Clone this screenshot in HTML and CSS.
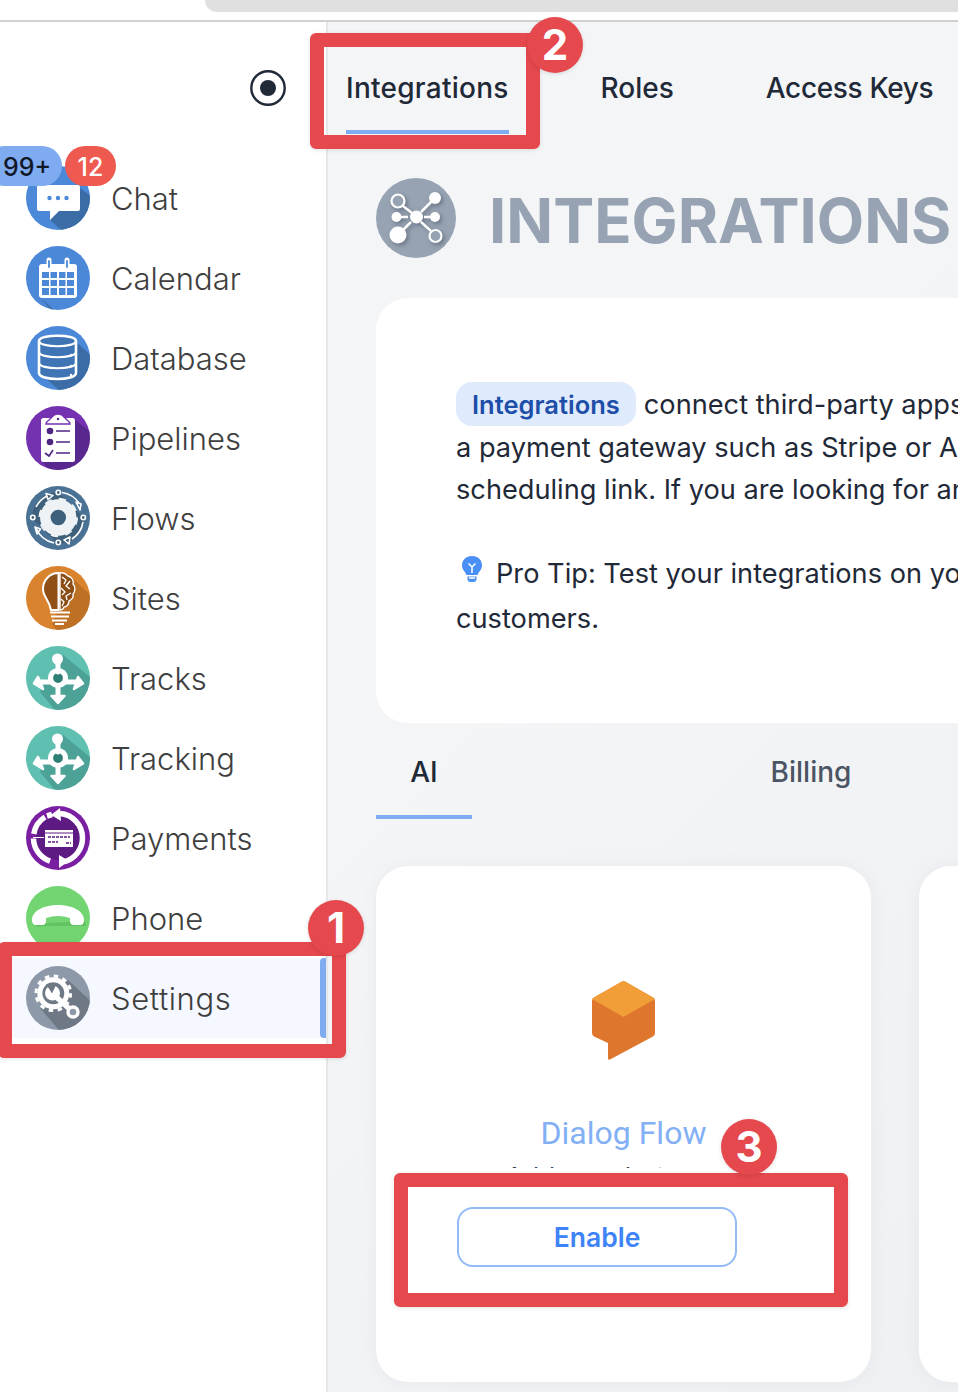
FILE: index.html
```html
<!DOCTYPE html>
<html lang="en">
<head>
<meta charset="utf-8">
<title>Integrations</title>
<link rel="stylesheet" href="styles.css">
</head>
<body>
<svg class="defs" width="0" height="0" aria-hidden="true">
  <defs>
    <clipPath id="disc"><circle cx="32" cy="32" r="32"/></clipPath>
    <symbol id="tracks-icon" viewBox="0 0 64 64">
      <circle cx="32" cy="32" r="32" fill="#5fbfb1"/>
      <path clip-path="url(#disc)" d="M37 9 L70 36 L70 70 L34 70 L14 46 Z" fill="#3f8f85" opacity=".6"/>
      <circle cx="32" cy="32" r="6" fill="#2f7f76"/>
      <g stroke="#fff" stroke-linecap="round" stroke-linejoin="round">
        <path d="M32 14 V26 M40 36 L52 36 M24 36 L12 36 M32 40 V52" stroke-width="5" fill="none"/>
        <path d="M52 31 L57 37.500 L48 43 Z M12 31 L8 37.500 L17 43 Z M25.500 50 L32 57 L38.500 50 Z" stroke-width="2.500" fill="#fff"/>
        <circle cx="32" cy="32" r="7.500" stroke-width="5.200" fill="none"/>
      </g>
      <circle cx="31.500" cy="13" r="5.500" fill="#fff"/>
    </symbol>
  </defs>
</svg>

<header class="topbar"><div class="address"></div></header>

<div class="shell">
  <aside class="sidebar">
    <div class="side-top">
      <svg class="record" viewBox="0 0 36 36"><circle cx="18" cy="18" r="16.700" fill="none" stroke="#1f2937" stroke-width="2.400"/><circle cx="18" cy="18" r="8" fill="#1f2937"/></svg>
    </div>
    <nav class="nav">
      <a class="nav-item">
        <svg class="nav-icon" viewBox="0 0 64 64"><circle cx="32" cy="32" r="32" fill="#4b89d8"/><path clip-path="url(#disc)" d="M54 22 L70 34 L70 70 L42 70 L24 54 Z" fill="#3b6ca6"/><path d="M13 19 H52 Q54 19 54 21 V43 Q54 45 52 45 H33 L24 54 V45 H13 Q11 45 11 43 V21 Q11 19 13 19Z" fill="#fff"/><g fill="#4b89d8"><circle cx="23.500" cy="32" r="2.200"/><circle cx="32" cy="32" r="2.200"/><circle cx="40.500" cy="32" r="2.200"/></g></svg>
        <span>Chat</span>
      </a>
      <a class="nav-item">
        <svg class="nav-icon" viewBox="0 0 64 64"><circle cx="32" cy="32" r="32" fill="#4b89d8"/><path clip-path="url(#disc)" d="M13 50 L30 66 L70 66 L70 70 L30 70 Z" fill="#3b6ca6"/><rect x="13" y="18" width="38" height="34" rx="3" fill="#fff"/><g fill="#4b89d8"><rect x="16" y="26" width="7" height="6"/><rect x="24.500" y="26" width="6.500" height="6"/><rect x="33" y="26" width="6.500" height="6"/><rect x="41" y="26" width="7" height="6"/><rect x="16" y="34" width="7" height="6"/><rect x="24.500" y="34" width="6.500" height="6"/><rect x="33" y="34" width="6.500" height="6"/><rect x="41" y="34" width="7" height="6"/><rect x="16" y="42" width="7" height="7"/><rect x="24.500" y="42" width="6.500" height="7"/><rect x="33" y="42" width="6.500" height="7"/><rect x="41" y="42" width="7" height="7"/></g><g stroke-linecap="round"><path d="M23 14 V22 M41 14 V22" stroke="#fff" stroke-width="5"/><path d="M23 15 V21 M41 15 V21" stroke="#4b89d8" stroke-width="1.800"/></g></svg>
        <span>Calendar</span>
      </a>
      <a class="nav-item">
        <svg class="nav-icon" viewBox="0 0 64 64"><circle cx="32" cy="32" r="32" fill="#4b89d8"/><path clip-path="url(#disc)" d="M50 16 L70 34 L70 70 L40 70 L17 50 Z" fill="#3b6ca6"/><path d="M13 15 C13 8 50 8 50 15 V47 C50 55 13 55 13 47 Z" fill="#3f74b5" stroke="#fff" stroke-width="2.600"/><path d="M13 15 C13 22 50 22 50 15 M13 26 C13 33 50 33 50 26 M13 37 C13 44 50 44 50 37" fill="none" stroke="#fff" stroke-width="2.200"/><g fill="#fff"><circle cx="45" cy="29" r="1.200"/><circle cx="45" cy="40" r="1.200"/><circle cx="45" cy="49" r="1.200"/></g></svg>
        <span>Database</span>
      </a>
      <a class="nav-item">
        <svg class="nav-icon" viewBox="0 0 64 64"><circle cx="32" cy="32" r="32" fill="#7431b0"/><path clip-path="url(#disc)" d="M49 14 L70 30 L70 70 L28 70 L15 54 Z" fill="#4f2583" opacity=".75"/><rect x="15" y="12" width="34" height="44" rx="2.500" fill="#fff"/><path d="M20 18 Q20 16 23 14 L28 9 Q32 7 36 9 L41 14 Q44 16 44 18Z" fill="#fff" stroke="#7431b0" stroke-width="1.500"/><circle cx="32" cy="13" r="1.200" fill="#4f2583"/><g fill="#4f2583"><circle cx="24" cy="25" r="3.300"/><circle cx="24" cy="36" r="3.300"/></g><path d="M30 25 H44 M30 36 H44 M30 47 H44" stroke="#4f2583" stroke-width="1.500"/><path d="M19 47 L23 50 L27 44" fill="none" stroke="#4f2583" stroke-width="1.600"/></svg>
        <span>Pipelines</span>
      </a>
      <a class="nav-item">
        <svg class="nav-icon" viewBox="0 0 64 64"><circle cx="32" cy="32" r="32" fill="#4a7295"/><path clip-path="url(#disc)" d="M6 32 A26 26 0 0 1 32 6 L58 32 A26 26 0 0 1 32 58 Z" fill="#39596f" opacity=".7"/><circle cx="32.300" cy="31.500" r="13" fill="none" stroke="#eef2f5" stroke-width="10.500"/><circle cx="32.300" cy="31.500" r="18" fill="none" stroke="#eef2f5" stroke-width="3.500" stroke-dasharray="7 7.140"/><g fill="none" stroke="#fff" stroke-width="1.600"><path d="M10 21 A25 25 0 0 1 21 10 M36 6.500 A25 25 0 0 1 53 17 M57 36 A25 25 0 0 1 46 53 M28 57 A25 25 0 0 1 10 42"/><circle cx="32.300" cy="6.500" r="2.200"/><circle cx="57.300" cy="31.500" r="2.200"/><circle cx="32.300" cy="56.500" r="2.200"/><circle cx="6.800" cy="31.500" r="2.200"/><path d="M20 7.500 L27 9.500 L22 13.500Z M50 16 L55 18 L54 24 Z M44 51 L38 54 L43 58Z M9 41 L14.500 43 L11 48Z" stroke-width="1.600" stroke-linejoin="round"/></g></svg>
        <span>Flows</span>
      </a>
      <a class="nav-item">
        <svg class="nav-icon" viewBox="0 0 64 64"><circle cx="32" cy="32" r="32" fill="#d9832f"/><path clip-path="url(#disc)" d="M46 12 L70 34 L70 70 L36 70 L26 58 Z" fill="#a8601d" opacity=".55"/><path d="M32.500 7 C23 7 17 15 17 23 C17 31 23 33 25 44 H32.500 Z" fill="#8f4f15" stroke="#fff" stroke-width="2"/><path d="M34 7 C37 6 40 8 42 10 C46 11 48 15 47 18 C50 21 49 26 47 28 C48 32 45 34 43 35 C43 39 40 41 38 41 C37 44 35 44 34 44 Z" fill="#8a4d16" stroke="#fff" stroke-width="1.400" stroke-linejoin="round"/><path d="M36 11 L40 14 L38 18 M44 15 L40 20 L44 23 M35 22 L39 26 L36 29 M45 27 L40 30 L41 34 M35 33 L38 36 L36 40" fill="none" stroke="#fff" stroke-width="1.300"/><path d="M24 46.500 H44 M25 50.500 H43 M26 54.500 H41 M29 58 H38" stroke="#fff" stroke-width="2.200"/></svg>
        <span>Sites</span>
      </a>
      <a class="nav-item">
        <svg class="nav-icon" viewBox="0 0 64 64"><use href="#tracks-icon"/></svg>
        <span>Tracks</span>
      </a>
      <a class="nav-item">
        <svg class="nav-icon" viewBox="0 0 64 64"><use href="#tracks-icon"/></svg>
        <span>Tracking</span>
      </a>
      <a class="nav-item">
        <svg class="nav-icon" viewBox="0 0 64 64"><circle cx="32" cy="32" r="32" fill="#7b1fa2"/><circle cx="32" cy="32" r="22" fill="#5e1a83"/><g fill="none" stroke="#fff" stroke-width="5.500"><path d="M34 7.500 A24.500 24.500 0 0 1 56.500 32 A24.500 24.500 0 0 1 38 55.800 M24 55.200 A24.500 24.500 0 0 1 7.500 32.500 M7.800 28 A24.500 24.500 0 0 1 19 11 M21 10 L26 8.500"/></g><path d="M34 2 L25 9 L35 15Z M33 49 L43 55 L33 62Z" fill="#fff"/><path d="M7 31.500 H18" stroke="#fff" stroke-width="1"/><rect x="19" y="24" width="28" height="17" fill="#fff"/><path d="M19 27 H47" stroke="#5e1a83" stroke-width="1"/><path d="M22 31 H44 M22 36 H32 M40 37 H45" stroke="#5e1a83" stroke-width="1.500" stroke-dasharray="3 1"/></svg>
        <span>Payments</span>
      </a>
      <a class="nav-item">
        <svg class="nav-icon" viewBox="0 0 64 64"><circle cx="32" cy="32" r="32" fill="#72d572"/><path d="M59 35 L60 40 H44 L20 40 L12 41 L7 38 Z" fill="#4ea54e" opacity=".4"/><path d="M6 34 C6 24 20 19 32 19 C44 19 58 24 58 34 Q58 39 54 39 L48 39 Q44 39 44 35 L44 32 Q38 30 32 30 Q26 30 20 32 L20 35 Q20 39 16 39 L10 39 Q6 39 6 34Z" fill="#fff"/></svg>
        <span>Phone</span>
      </a>
      <a class="nav-item nav-item-active">
        <svg class="nav-icon" viewBox="0 0 64 64"><circle cx="32" cy="32" r="32" fill="#8d99a8"/><path clip-path="url(#disc)" d="M42 14 L70 40 L70 70 L38 70 L14 42 Z" fill="#6f7986"/><circle cx="27.300" cy="27.300" r="11" fill="#6f7986"/><circle cx="27.300" cy="27.300" r="13.500" fill="none" stroke="#fff" stroke-width="5"/><circle cx="27.300" cy="27.300" r="17.300" fill="none" stroke="#fff" stroke-width="3" stroke-dasharray="4.500 4.550"/><circle cx="26.500" cy="27" r="7.500" fill="#fff"/><path d="M26 27.500 L20 18 L31 17Z" fill="#6f7986"/><path d="M28 29 L43 42.500" stroke="#fff" stroke-width="5.200"/><circle cx="47" cy="46" r="5" fill="#8d99a8" stroke="#fff" stroke-width="3.400"/></svg>
        <span class="nav-label-wide">Settings</span>
      </a>
    </nav>
  </aside>

  <main class="main">
    <div class="tabs">
      <a class="tab tab-active">Integrations</a>
      <a class="tab">Roles</a>
      <a class="tab tab-tight">Access Keys</a>
    </div>

    <div class="heading">
      <svg class="heading-icon" viewBox="0 0 80 80">
        <circle cx="40" cy="40" r="40" fill="#97a3b2"/>
        <g class="heading-glyph" fill="#fff" stroke="#fff">
          <path d="M27 28 L36 35 M45 34 L56 23 M24 39 H32 M48 39 H56 M35 44 L26 53 M45 44 L55 53" stroke-width="2.500" fill="none"/>
          <circle cx="40.500" cy="39" r="6.500" stroke="none"/>
          <circle cx="59" cy="20" r="6" stroke="none"/>
          <circle cx="20.500" cy="39" r="5" stroke="none"/>
          <circle cx="59" cy="39" r="5" stroke="none"/>
          <circle cx="22" cy="57" r="8.500" stroke="none"/>
          <circle cx="22" cy="23" r="6.500" fill="#97a3b2" stroke-width="2.200"/>
          <circle cx="59.500" cy="58" r="6" fill="#97a3b2" stroke-width="2.200"/>
        </g>
      </svg>
      <h1 class="title">INTEGRATIONS</h1>
    </div>

    <section class="intro">
      <p class="line line-tall"><span class="pill">Integrations</span>connect third-party apps and services to your account, such as</p>
      <p class="line">a payment gateway such as Stripe or Authorize.net, or a calendar</p>
      <p class="line">scheduling link. If you are looking for an integration, ask us.</p>
      <p class="line line-blank">&nbsp;</p>
      <p class="line line-tall line-tip">
        <svg class="tip-bulb" viewBox="0 0 20 26"><path d="M10 0 C4 0 0 4 0 9.500 C0 13.500 3 15.500 4.500 19 H15.500 C17 15.500 20 13.500 20 9.500 C20 4 16 0 10 0Z" fill="#4a8ff5"/><path d="M5.500 20.500 H14.500 V23 Q14.500 26 11.500 26 H8.500 Q5.500 26 5.500 23Z" fill="#4a8ff5"/><path d="M6.500 7.500 L10 11 L13.500 7.500 M10 11 V17 M7 22 H13" fill="none" stroke="#fff" stroke-width="1.500"/></svg>
        <span>Pro Tip: Test your integrations on your own account before offering them to</span>
      </p>
      <p class="line line-tall">customers.</p>
    </section>

    <div class="subtabs">
      <a class="subtab subtab-active">AI</a>
      <a class="subtab">Billing</a>
    </div>

    <div class="cards">
      <article class="card">
        <svg class="card-logo" viewBox="0 0 63 79"><path d="M30 .6 Q31.500 0 33 .6 L61 16.500 Q63 17.500 63 20 V52 Q63 54 61 55.500 L18 78.500 Q16 79.500 16 77 V62 L2 55.500 Q0 54 0 52 V20 Q0 17.500 2 16.500Z" fill="#de762d"/><path d="M30 .6 Q31.500 0 33 .6 L61 16.500 Q62.500 17.400 63 18 L31.500 36 L0 18 Q.5 17.400 2 16.500Z" fill="#f19e38"/></svg>
        <h2 class="card-title">Dialog Flow</h2>
        <p class="card-desc">Add your bot agent</p>
        <button class="enable">Enable</button>
      </article>
      <article class="card card-next"></article>
    </div>
  </main>
</div>

<div class="callout callout-one"></div>
<div class="callout callout-two"></div>
<div class="callout callout-three"></div>
<div class="step step-one">1</div>
<div class="step step-two">2</div>
<div class="step step-three">3</div>
<div class="count count-blue">99+</div>
<div class="count count-red">12</div>
</body>
</html>
```

FILE: styles.css
```css
* { box-sizing: border-box; }

html, body {
  margin: 0;
  height: 1392px;
  overflow: hidden;
}

body {
  position: relative;
  width: 958px;
  background: #fff;
  font-family: Inter, "Liberation Sans", sans-serif;
  color: #1f2937;
}

.defs { position: absolute; }

.topbar {
  height: 22px;
  border-bottom: 2px solid #d1d1d1;
  padding-left: 205px;
  background: #fff;
}

.address {
  height: 12px;
  background: #e0e0e0;
  border-bottom-left-radius: 24px;
}

.shell {
  display: flex;
  height: 1370px;
}

.sidebar {
  flex: 0 0 328px;
  border-right: 2px solid #e5e7eb;
  background: #fff;
}

.side-top {
  display: flex;
  justify-content: flex-end;
  height: 136px;
  padding: 48px 40px 0 0;
}

.record { width: 36px; height: 36px; }

.nav { display: flex; flex-direction: column; }

.nav-item {
  display: flex;
  align-items: center;
  gap: 21px;
  height: 80px;
  padding-left: 26px;
  font-family: Inter, sans-serif;
  font-size: 31px;
  font-weight: 300;
  color: #3f3f3f;
}

.nav-label-wide { letter-spacing: .6px; }

.nav-item-active {
  background: #f5f8fe;
  position: relative;
}

.nav-item-active::after {
  content: "";
  position: absolute;
  top: 0;
  bottom: 0;
  right: 0;
  width: 6px;
  border-radius: 4px 0 0 4px;
  background: #7fabf0;
}

.nav-icon { width: 64px; height: 64px; flex: none; }

.main {
  flex: 1;
  min-width: 0;
  overflow: hidden;
  padding-left: 48px;
  background: linear-gradient(135deg, #f4f5f7 40%, #eef0f3 100%);
}

.tabs {
  display: flex;
  gap: 92px;
  margin-left: -30px;
}

.tab {
  padding: 50px 0 26px;
  border-bottom: 4px solid transparent;
  font-size: 28px;
  font-weight: 500;
  line-height: 32px;
  white-space: nowrap;
}

.tab-active {
  border-bottom-color: #7fabf0;
  letter-spacing: .25px;
}

.tab-tight { letter-spacing: -.35px; }

.heading {
  display: flex;
  align-items: center;
  gap: 33px;
  margin-top: 44px;
}

.heading-icon { width: 80px; height: 80px; flex: none; }

.heading-glyph { filter: drop-shadow(2px 2px 2px rgba(60, 70, 85, .5)); }

.title {
  height: 80px;
  margin: 0;
  padding-top: 3px;
  font-size: 61.5px;
  font-weight: 700;
  line-height: 80px;
  color: #97a3b2;
  white-space: nowrap;
}

.intro {
  width: 700px;
  height: 425px;
  margin-top: 40px;
  padding: 84px 0 0 80px;
  border-radius: 32px;
  background: #fff;
  font-size: 27.2px;
  color: #1f2937;
}

.line {
  margin: 0;
  height: 42px;
  line-height: 44px;
  white-space: nowrap;
}

.line-tall { height: 44px; line-height: 46px; }

.line-tip {
  display: flex;
  align-items: center;
  gap: 14px;
}

.tip-bulb {
  width: 20px;
  height: 26px;
  margin: -10px 0 0 6px;
  flex: none;
}

.pill {
  display: inline-block;
  height: 44px;
  margin-right: 8px;
  padding: 0 16px;
  border-radius: 16px;
  background: #e0eafd;
  color: #1e4fa8;
  font-size: 25.5px;
  font-weight: 600;
  vertical-align: top;
}

.subtabs {
  display: flex;
  gap: 291px;
}

.subtab {
  width: 96px;
  padding: 33px 0 27px;
  border-bottom: 4px solid transparent;
  font-size: 28px;
  font-weight: 500;
  line-height: 32px;
  text-align: center;
  color: #4b5563;
}

.subtab-active {
  border-bottom-color: #7fabf0;
  color: #1f2937;
}

.cards {
  display: flex;
  gap: 48px;
  margin-top: 47px;
  width: 800px;
}

.card {
  flex: none;
  display: flex;
  flex-direction: column;
  align-items: flex-start;
  width: 495px;
  height: 516px;
  padding: 115px 81px 0;
  border-radius: 32px;
  background: #fff;
  box-shadow: 0 0 0 1px #eceef1, 0 0 16px rgba(120, 130, 145, .08);
}

.card-next { width: 200px; }

.card-logo {
  width: 63px;
  height: 79px;
  align-self: center;
}

.card-title {
  margin: 57px 0 0;
  align-self: center;
  font-family: Roboto, sans-serif;
  font-size: 32px;
  font-weight: 400;
  line-height: 32px;
  color: #83b0f5;
}

.card-desc {
  align-self: center;
  height: 3px;
  margin: 16px 0 0;
  overflow: hidden;
  font-size: 26px;
  line-height: 24px;
  color: #374151;
  white-space: nowrap;
}

.enable {
  width: 280px;
  height: 60px;
  margin-top: 39px;
  border: 2px solid #93bbf8;
  border-radius: 16px;
  background: #fff;
  font-family: Inter, sans-serif;
  font-size: 26.5px;
  font-weight: 600;
  color: #3f83f8;
}

/* annotation overlays */
.callout {
  position: absolute;
  border: 14px solid #e5484d;
  border-radius: 6px;
  box-shadow: 0 1px 4px rgba(0, 0, 0, .12);
}

.callout-one { left: -2px; top: 942px; width: 348px; height: 116px; }
.callout-two { left: 310px; top: 33px; width: 230px; height: 116px; }
.callout-three { left: 394px; top: 1173px; width: 454px; height: 134px; }

.step {
  position: absolute;
  width: 56px;
  height: 56px;
  border-radius: 50%;
  background: #e5484d;
  color: #fff;
  font-size: 42px;
  font-weight: 700;
  line-height: 56px;
  text-align: center;
  box-shadow: 0 1px 4px rgba(0, 0, 0, .12);
}

.step-one { left: 308px; top: 900px; }
.step-two { left: 527px; top: 17px; }
.step-three { left: 721px; top: 1119px; }

.count {
  position: absolute;
  top: 146px;
  height: 40px;
  border-radius: 20px;
  font-size: 25px;
  font-weight: 500;
  line-height: 43px;
  text-align: center;
}

.count-blue {
  left: -16px;
  width: 78px;
  padding-left: 8px;
  background: #7fabf0;
  color: #111827;
}

.count-red {
  left: 65px;
  width: 51px;
  background: #ef5a50;
  color: #fff;
}
```
